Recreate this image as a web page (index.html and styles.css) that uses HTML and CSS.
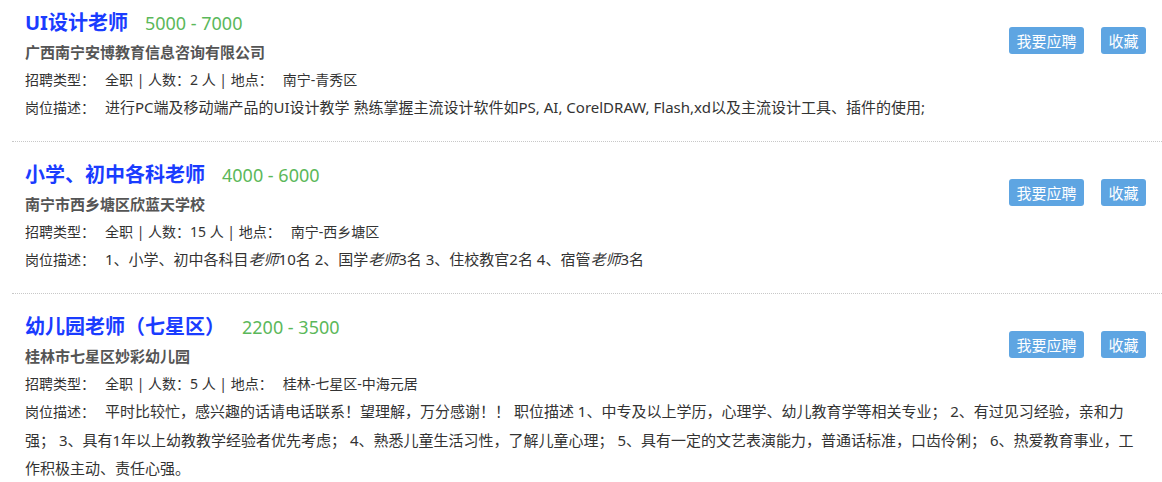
FILE: index.html
```html
<!DOCTYPE html>
<html lang="zh-CN">
<head>
<meta charset="utf-8">
<title>招聘信息</title>
<link rel="stylesheet" href="styles.css">
</head>
<body>
<div class="list">
  <div class="job">
    <div class="job-main">
      <div class="job-head"><a class="job-title" href="#">UI设计老师</a><span class="salary">5000 - 7000</span></div>
      <div class="company">广西南宁安博教育信息咨询有限公司</div>
      <div class="meta"><span class="label">招聘类型：</span>全职 | 人数：2 人 | <span class="label">地点：</span>南宁-青秀区</div>
    </div>
    <div class="actions"><button class="btn">我要应聘</button><button class="btn">收藏</button></div>
    <div class="desc"><span class="label">岗位描述：</span>进行PC端及移动端产品的UI设计教学 熟练掌握主流设计软件如PS, AI, CorelDRAW, Flash,xd以及主流设计工具、插件的使用;</div>
  </div>
  <div class="job">
    <div class="job-main">
      <div class="job-head"><a class="job-title" href="#">小学、初中各科老师</a><span class="salary">4000 - 6000</span></div>
      <div class="company">南宁市西乡塘区欣蓝天学校</div>
      <div class="meta"><span class="label">招聘类型：</span>全职 | 人数：15 人 | <span class="label">地点：</span>南宁-西乡塘区</div>
    </div>
    <div class="actions"><button class="btn">我要应聘</button><button class="btn">收藏</button></div>
    <div class="desc"><span class="label">岗位描述：</span>1、小学、初中各科目<em>老师</em>10名 2、国学<em>老师</em>3名 3、住校教官2名 4、宿管<em>老师</em>3名</div>
  </div>
  <div class="job">
    <div class="job-main">
      <div class="job-head"><a class="job-title" href="#">幼儿园老师（七星区）</a><span class="salary">2200 - 3500</span></div>
      <div class="company">桂林市七星区妙彩幼儿园</div>
      <div class="meta"><span class="label">招聘类型：</span>全职 | 人数：5 人 | <span class="label">地点：</span>桂林-七星区-中海元居</div>
    </div>
    <div class="actions"><button class="btn">我要应聘</button><button class="btn">收藏</button></div>
    <div class="desc"><span class="label">岗位描述：</span>平时比较忙，感兴趣的话请电话联系！望理解，万分感谢！！ 职位描述 1、中专及以上学历，心理学、幼儿教育学等相关专业； 2、有过见习经验，亲和力强； 3、具有1年以上幼教教学经验者优先考虑； 4、熟悉儿童生活习性，了解儿童心理； 5、具有一定的文艺表演能力，普通话标准，口齿伶俐； 6、热爱教育事业，工作积极主动、责任心强。</div>
  </div>
</div>
</body>
</html>
```
FILE: styles.css
```css
* { box-sizing: border-box; }
html, body {
  margin: 0;
  padding: 0;
  background: #fff;
}
body {
  font-family: "Noto Sans", "Noto Sans CJK SC", sans-serif;
  font-size: 14px;
  color: #333;
}
.list {
  padding-left: 12px;
}
.job {
  display: grid;
  grid-template-columns: 1fr auto;
  padding: 18px 16px 19px 13px;
  border-top: 1px dotted #c8c8c8;
}
.job:first-child {
  border-top: 0;
  padding-top: 8px;
}
.job-head {
  display: flex;
  align-items: baseline;
  height: 30px;
  line-height: 30px;
}
.job-title {
  font-size: 20px;
  font-weight: bold;
  color: #1a3cff;
  text-decoration: none;
  margin-right: 17px;
}
.salary {
  font-size: 18px;
  color: #5bb85a;
}
.company {
  font-size: 15px;
  font-weight: bold;
  color: #555;
  line-height: 28px;
}
.meta {
  line-height: 27px;
}
.label {
  font-size: 14px;
  margin-right: 10px;
}
.desc {
  grid-column: 1 / -1;
  font-size: 15px;
  line-height: 28px;
  padding-right: 10px;
}
.desc em {
  font-style: italic;
}
.actions {
  display: flex;
  gap: 17px;
  margin-top: 19px;
  align-self: start;
}
.btn {
  font-family: "Noto Sans CJK SC", sans-serif;
  font-size: 15px;
  height: 27px;
  line-height: 27px;
  padding: 0 7.5px;
  border: 0;
  border-radius: 3px;
  background: #5ea5e2;
  color: #fff;
  cursor: pointer;
}
```
